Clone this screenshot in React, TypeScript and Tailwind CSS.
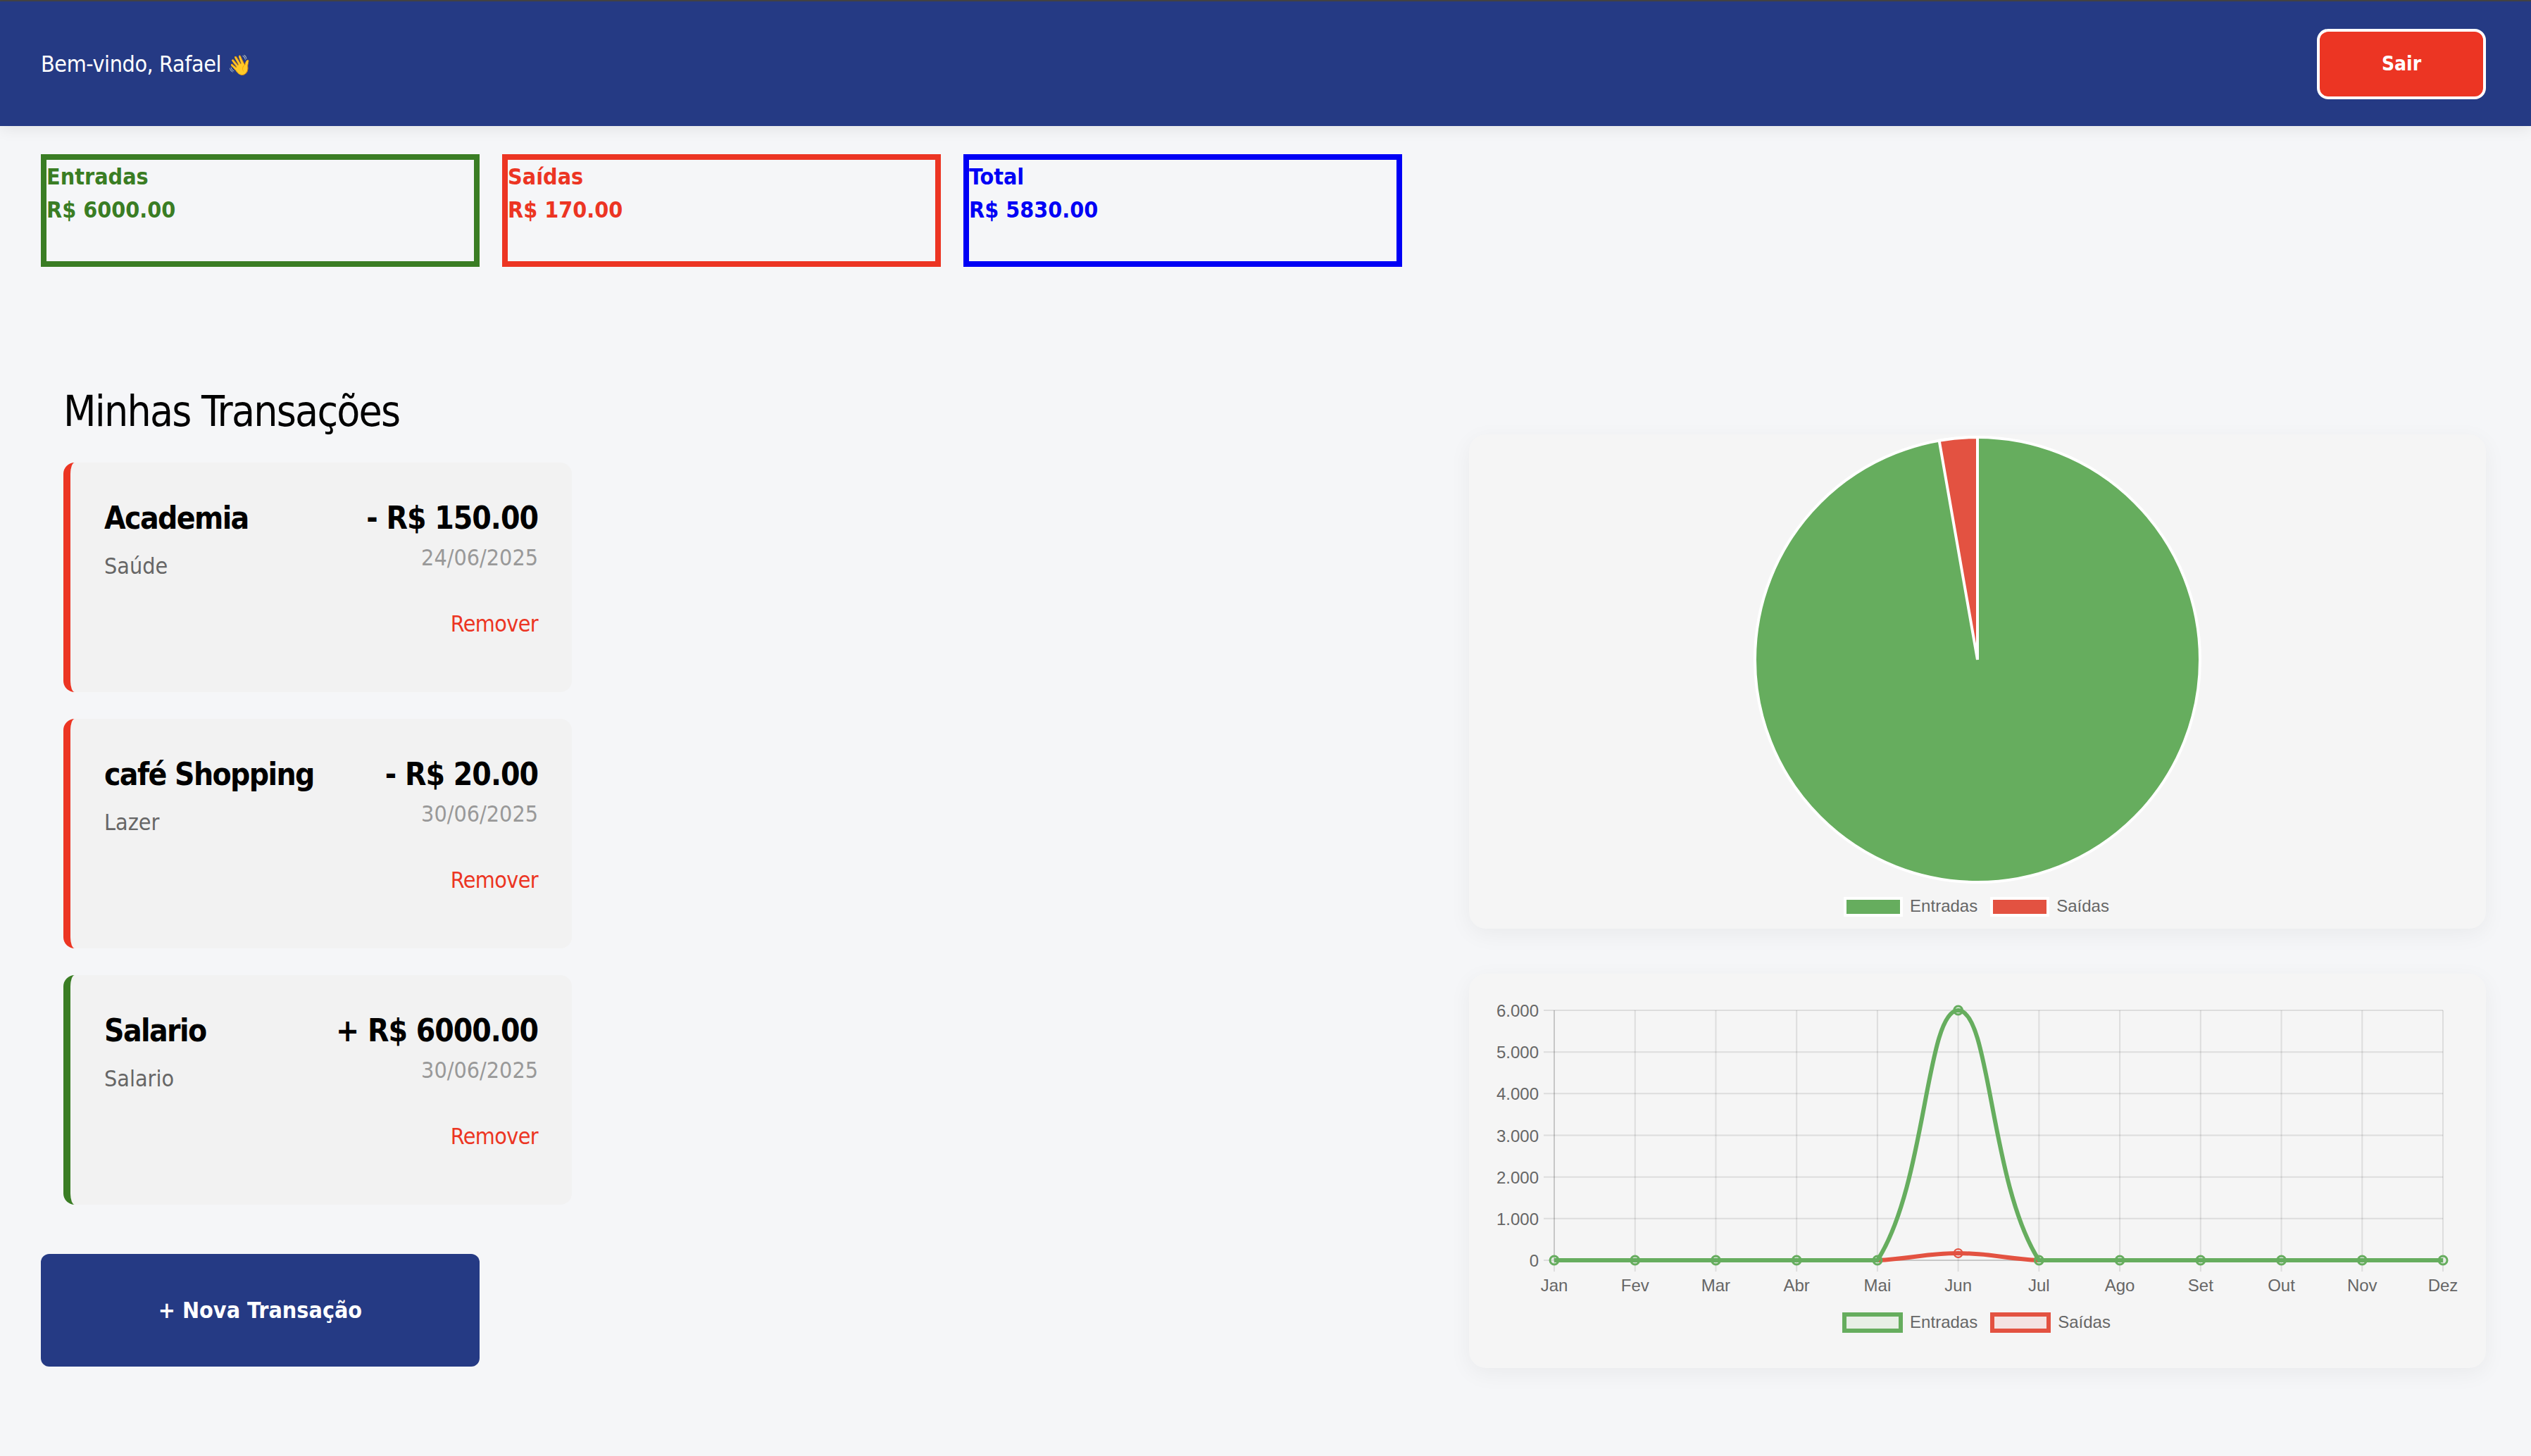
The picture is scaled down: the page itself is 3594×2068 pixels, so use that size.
import React from 'react';

const GREEN = '#66ad5e';
const RED = '#e35241';

const months = ['Jan', 'Fev', 'Mar', 'Abr', 'Mai', 'Jun', 'Jul', 'Ago', 'Set', 'Out', 'Nov', 'Dez'];
const yTicks = ['6.000', '5.000', '4.000', '3.000', '2.000', '1.000', '0'];

const stats = [
  { label: 'Entradas', value: 'R$ 6000.00', className: 'border-[#3a7d24] text-[#3a7d24]' },
  { label: 'Saídas', value: 'R$ 170.00', className: 'border-[#ec3523] text-[#ec3523]' },
  { label: 'Total', value: 'R$ 5830.00', className: 'border-[#0000f5] text-[#0000f5]' },
];

const transactions = [
  { title: 'Academia', category: 'Saúde', amount: '- R$ 150.00', date: '24/06/2025', border: 'border-l-[#ec3523]' },
  { title: 'café Shopping', category: 'Lazer', amount: '- R$ 20.00', date: '30/06/2025', border: 'border-l-[#ec3523]' },
  { title: 'Salario', category: 'Salario', amount: '+ R$ 6000.00', date: '30/06/2025', border: 'border-l-[#3a7d24]' },
];

const PieChart = () => (
  <svg width={1444} height={642} className="block">
    <circle cx={722} cy={320} r={316} fill={GREEN} stroke="#fff" strokeWidth={4} />
    <path d="M722 320 L667.6 8.7 A316 316 0 0 1 722 4 Z" fill={RED} stroke="#fff" strokeWidth={4} />
  </svg>
);

const LineChart = () => {
  const left = 121;
  const right = 1383;
  const top = 52;
  const bottom = 407;
  const stepX = (right - left) / 11;
  const stepY = (bottom - top) / 6;
  const x = (i: number) => left + stepX * i;
  return (
    <svg width={1444} height={462} className="block">
      {yTicks.map((t, i) => (
        <g key={t}>
          <line x1={left - 15} x2={right} y1={top + stepY * i} y2={top + stepY * i} stroke="#00000019" strokeWidth={2} />
          <text x={left - 22} y={top + stepY * i + 9} textAnchor="end" fontSize={24} fill="#666" fontFamily="Liberation Sans, sans-serif">
            {t}
          </text>
        </g>
      ))}
      {months.map((m, i) => (
        <g key={m}>
          <line x1={x(i)} x2={x(i)} y1={top} y2={bottom + 16} stroke="#00000019" strokeWidth={2} />
          <text x={x(i)} y={451} textAnchor="middle" fontSize={24} fill="#666" fontFamily="Liberation Sans, sans-serif">
            {m}
          </text>
        </g>
      ))}
      <line x1={left} x2={left} y1={top} y2={bottom} stroke="#00000019" strokeWidth={2} />
      <line x1={left} x2={right} y1={bottom} y2={bottom} stroke="#00000019" strokeWidth={2} />

      {/* Saídas */}
      <path d={`M${x(0)} ${bottom} L${x(4)} ${bottom} C${x(4) + 46} ${bottom - 2} ${x(5) - 46} ${bottom - 10} ${x(5)} ${bottom - 10} C${x(5) + 46} ${bottom - 10} ${x(6) - 46} ${bottom - 2} ${x(6)} ${bottom} L${x(11)} ${bottom}`} fill="none" stroke={RED} strokeWidth={6} />
      <circle cx={x(5)} cy={bottom - 10} r={6} fill="#e352411a" stroke={RED} strokeWidth={2} />

      {/* Entradas */}
      <path d={`M${x(0)} ${bottom} L${x(4)} ${bottom} C${x(4) + 70} ${bottom - 109} ${x(5) - 46} ${top} ${x(5)} ${top} C${x(5) + 46} ${top} ${x(6) - 70} ${bottom - 109} ${x(6)} ${bottom} L${x(11)} ${bottom}`} fill="none" stroke={GREEN} strokeWidth={6} />
      {months.map((m, i) => (
        <circle key={m} cx={x(i)} cy={i === 5 ? top : bottom} r={6} fill="#66ad5e1a" stroke={GREEN} strokeWidth={3} />
      ))}
    </svg>
  );
};

const LegendText = ({ children }: { children: React.ReactNode }) => (
  <span className="[font-family:'Liberation_Sans',sans-serif] text-[24px] leading-[28px] text-[#666]">{children}</span>
);

export default function App() {
  return (
    <div className="min-h-screen bg-[#f5f6f8] [font-family:'DejaVu_Sans_Condensed','DejaVu_Sans',sans-serif] [font-stretch:condensed]">
      <div className="h-[2px] bg-[#444]" />
      <header className="h-[177px] bg-[#253a84] flex items-center justify-between pl-[58px] pr-[64px] shadow-[0_4px_20px_rgba(0,0,0,0.08)]">
        <span className="text-white text-[32px] tracking-[-0.4px]">
          Bem-vindo, Rafael <span className="text-[28px]">👋</span>
        </span>
        <button className="w-[240px] h-[100px] bg-[#ec3523] border-4 border-white rounded-[16px] text-white text-[28px] font-bold">
          Sair
        </button>
      </header>

      <section className="flex gap-8 pl-[58px] mt-[40px]">
        {stats.map((s) => (
          <div key={s.label} className={`w-[623px] h-[160px] border-8 pt-px font-bold text-[32px] leading-[47px] ${s.className}`}>
            <div>{s.label}</div>
            <div>{s.value}</div>
          </div>
        ))}
      </section>

      <main className="flex items-start justify-between pl-[58px] pr-[64px] mt-[169px]">
        <div className="w-[800px]">
          <div className="pl-8 w-[754px]">
            <h2 className="text-[60px] leading-[72px] tracking-[-1.75px] text-black mb-[37px]">Minhas Transações</h2>
            <div className="flex flex-col gap-[38px]">
              {transactions.map((t) => (
                <div key={t.title} className={`h-[326px] bg-[#f2f2f2] rounded-[16px] border-l-[10px] pl-[48px] pr-[48px] pt-[52px] flex justify-between ${t.border}`}>
                  <div>
                    <div className="text-[44px] leading-[53px] tracking-[-1.6px] font-bold text-black">{t.title}</div>
                    <div className="mt-[23px] text-[32px] leading-[38px] text-[#666]">{t.category}</div>
                  </div>
                  <div className="text-right">
                    <div className="text-[44px] leading-[53px] tracking-[-1px] font-bold text-black">{t.amount}</div>
                    <div className="mt-[11px] text-[32px] leading-[38px] text-[#999]">{t.date}</div>
                    <div className="mt-[56px] text-[32px] leading-[38px] tracking-[-0.6px] text-[#ec3523]">Remover</div>
                  </div>
                </div>
              ))}
            </div>
          </div>
          <button className="mt-[70px] w-[623px] h-[160px] bg-[#253a84] rounded-[12px] text-white text-[32px] font-bold">
            + Nova Transação
          </button>
        </div>

        <div className="w-[1444px] mt-[69px] flex flex-col gap-[64px]">
          <div className="h-[702px] bg-[#f5f5f5] rounded-[24px] shadow-[0_8px_32px_rgba(0,0,0,0.05)]">
            <PieChart />
            <div className="mt-[14px] flex items-center justify-center pr-[3px]">
              <span className="w-[84px] h-[28px] border-4 border-white bg-[#66ad5e]" />
              <span className="ml-[10px] mr-[18px]"><LegendText>Entradas</LegendText></span>
              <span className="w-[84px] h-[28px] border-4 border-white bg-[#e35241]" />
              <span className="ml-[10px]"><LegendText>Saídas</LegendText></span>
            </div>
          </div>

          <div className="h-[560px] bg-[#f5f5f5] rounded-[24px] shadow-[0_8px_32px_rgba(0,0,0,0.05)]">
            <LineChart />
            <div className="mt-[19px] flex items-center justify-center pr-[3px]">
              <span className="w-[86px] h-[29px] border-[6px] border-[#66ad5e] bg-[#e8efe6]" />
              <span className="ml-[10px] mr-[18px]"><LegendText>Entradas</LegendText></span>
              <span className="w-[86px] h-[29px] border-[6px] border-[#e35241] bg-[#f4e3e2]" />
              <span className="ml-[10px]"><LegendText>Saídas</LegendText></span>
            </div>
          </div>
        </div>
      </main>
    </div>
  );
}
